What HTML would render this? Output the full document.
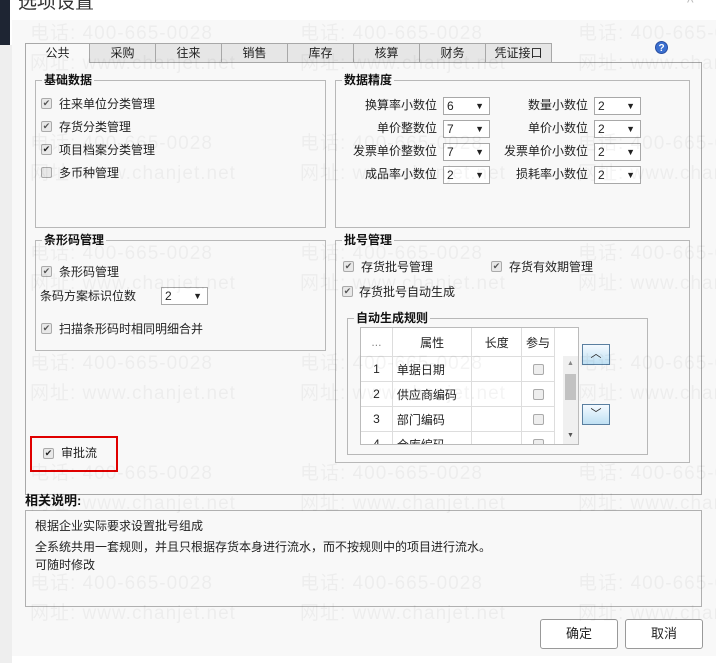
<!DOCTYPE html>
<html><head><meta charset="utf-8"><style>
*{box-sizing:border-box;margin:0;padding:0}
body{width:716px;height:663px;position:relative;background:#fff;font-family:"Liberation Sans","Noto Sans CJK SC",sans-serif;font-size:12px;color:#222;overflow:hidden}
.a{position:absolute}
.fs{position:absolute;border:1px solid #b8b8b8}
.lg{position:absolute;top:-9px;left:6px;background:#f8f8f8;padding:0 2px;font-weight:bold;font-size:12px;color:#111;line-height:16px}
.cb{position:absolute;width:11px;height:11px;border:1px solid #aaa;border-radius:2px;background:#e8e8e8;font-size:9px;line-height:9px;text-align:center;color:#555}
.t{position:absolute;white-space:nowrap;line-height:16px}
.sel{position:absolute;width:47px;height:18px;border:1px solid #a8a8a8;background:#fff;line-height:16px;padding-left:3px;font-size:12px}
.sel:after{content:"▼";position:absolute;right:5px;top:0;font-size:9px}
.tab{position:absolute;top:43px;height:19px;border:1px solid #a8a8a8;border-bottom:none;background:#e6e6e6;text-align:center;line-height:18px}
.wm{position:absolute;color:rgba(0,0,0,0.045);font-size:19px;white-space:nowrap;letter-spacing:1px;z-index:5}
td{border:1px solid #ddd;height:25px;font-size:12px}
</style></head><body>
<div class="a" style="left:0;top:0;width:10px;height:45px;background:#1e2533"></div>
<div class="a" style="left:0;top:45px;width:12px;height:618px;background:#eee"></div>
<div class="a" style="left:12px;top:20px;width:704px;height:636px;background:#f8f8f8"></div>
<div class="t" style="left:18px;top:-8px;font-size:19px;line-height:22px;color:#333">选项设置</div>
<div class="t" style="left:687px;top:-6px;font-size:14px;color:#bbb">^</div>
<!-- watermarks -->
<div class="wm" style="left:30px;top:18px">电话: 400-665-0028</div><div class="wm" style="left:300px;top:18px">电话: 400-665-0028</div><div class="wm" style="left:578px;top:18px">电话: 400-665-0028</div>
<div class="wm" style="left:30px;top:48px">网址: www.chanjet.net</div><div class="wm" style="left:300px;top:48px">网址: www.chanjet.net</div><div class="wm" style="left:578px;top:48px">网址: www.chanjet.net</div>
<div class="wm" style="left:30px;top:128px">电话: 400-665-0028</div><div class="wm" style="left:300px;top:128px">电话: 400-665-0028</div><div class="wm" style="left:578px;top:128px">电话: 400-665-0028</div>
<div class="wm" style="left:30px;top:158px">网址: www.chanjet.net</div><div class="wm" style="left:300px;top:158px">网址: www.chanjet.net</div><div class="wm" style="left:578px;top:158px">网址: www.chanjet.net</div>
<div class="wm" style="left:30px;top:238px">电话: 400-665-0028</div><div class="wm" style="left:300px;top:238px">电话: 400-665-0028</div><div class="wm" style="left:578px;top:238px">电话: 400-665-0028</div>
<div class="wm" style="left:30px;top:268px">网址: www.chanjet.net</div><div class="wm" style="left:300px;top:268px">网址: www.chanjet.net</div><div class="wm" style="left:578px;top:268px">网址: www.chanjet.net</div>
<div class="wm" style="left:30px;top:348px">电话: 400-665-0028</div><div class="wm" style="left:300px;top:348px">电话: 400-665-0028</div><div class="wm" style="left:578px;top:348px">电话: 400-665-0028</div>
<div class="wm" style="left:30px;top:378px">网址: www.chanjet.net</div><div class="wm" style="left:300px;top:378px">网址: www.chanjet.net</div><div class="wm" style="left:578px;top:378px">网址: www.chanjet.net</div>
<div class="wm" style="left:30px;top:458px">电话: 400-665-0028</div><div class="wm" style="left:300px;top:458px">电话: 400-665-0028</div><div class="wm" style="left:578px;top:458px">电话: 400-665-0028</div>
<div class="wm" style="left:30px;top:488px">网址: www.chanjet.net</div><div class="wm" style="left:300px;top:488px">网址: www.chanjet.net</div><div class="wm" style="left:578px;top:488px">网址: www.chanjet.net</div>
<div class="wm" style="left:30px;top:568px">电话: 400-665-0028</div><div class="wm" style="left:300px;top:568px">电话: 400-665-0028</div><div class="wm" style="left:578px;top:568px">电话: 400-665-0028</div>
<div class="wm" style="left:30px;top:598px">网址: www.chanjet.net</div><div class="wm" style="left:300px;top:598px">网址: www.chanjet.net</div><div class="wm" style="left:578px;top:598px">网址: www.chanjet.net</div>
<!-- tabs -->
<div class="a" style="left:25px;top:62px;width:677px;height:433px;border:1px solid #a8a8a8;background:#f8f8f8"></div>
<div class="tab" style="left:25px;width:65px;background:#f8f8f8;height:20px">公共</div>
<div class="tab" style="left:89px;width:67px">采购</div>
<div class="tab" style="left:155px;width:67px">往来</div>
<div class="tab" style="left:221px;width:67px">销售</div>
<div class="tab" style="left:287px;width:67px">库存</div>
<div class="tab" style="left:353px;width:67px">核算</div>
<div class="tab" style="left:419px;width:67px">财务</div>
<div class="tab" style="left:485px;width:67px">凭证接口</div>
<div class="a" style="left:655px;top:41px;width:13px;height:13px;border-radius:50%;background:#3a6fd0;color:#fff;font-size:10px;font-weight:bold;text-align:center;line-height:13px;border:1px solid #2a4fa0">?</div>
<!-- 基础数据 -->
<div class="fs" style="left:35px;top:80px;width:291px;height:148px"><div class="lg">基础数据</div></div>
<div class="cb" style="left:41px;top:98px">✔</div><div class="t" style="left:59px;top:96px">往来单位分类管理</div>
<div class="cb" style="left:41px;top:121px">✔</div><div class="t" style="left:59px;top:119px">存货分类管理</div>
<div class="cb" style="left:41px;top:144px;color:#222">✔</div><div class="t" style="left:59px;top:142px">项目档案分类管理</div>
<div class="cb" style="left:41px;top:167px"></div><div class="t" style="left:59px;top:165px">多币种管理</div>
<!-- 数据精度 -->
<div class="fs" style="left:335px;top:80px;width:355px;height:148px"><div class="lg">数据精度</div></div>
<div class="t" style="left:340px;top:97px;width:97px;text-align:right">换算率小数位</div><div class="sel" style="left:443px;top:97px">6</div>
<div class="t" style="left:340px;top:120px;width:97px;text-align:right">单价整数位</div><div class="sel" style="left:443px;top:120px">7</div>
<div class="t" style="left:340px;top:143px;width:97px;text-align:right">发票单价整数位</div><div class="sel" style="left:443px;top:143px">7</div>
<div class="t" style="left:340px;top:166px;width:97px;text-align:right">成品率小数位</div><div class="sel" style="left:443px;top:166px">2</div>
<div class="t" style="left:493px;top:97px;width:95px;text-align:right">数量小数位</div><div class="sel" style="left:594px;top:97px">2</div>
<div class="t" style="left:493px;top:120px;width:95px;text-align:right">单价小数位</div><div class="sel" style="left:594px;top:120px">2</div>
<div class="t" style="left:493px;top:143px;width:95px;text-align:right">发票单价小数位</div><div class="sel" style="left:594px;top:143px">2</div>
<div class="t" style="left:493px;top:166px;width:95px;text-align:right">损耗率小数位</div><div class="sel" style="left:594px;top:166px">2</div>
<!-- 条形码 -->
<div class="fs" style="left:35px;top:240px;width:291px;height:111px"><div class="lg">条形码管理</div></div>
<div class="cb" style="left:41px;top:266px">✔</div><div class="t" style="left:59px;top:264px">条形码管理</div>
<div class="t" style="left:40px;top:288px">条码方案标识位数</div><div class="sel" style="left:161px;top:287px">2</div>
<div class="cb" style="left:41px;top:323px">✔</div><div class="t" style="left:59px;top:321px">扫描条形码时相同明细合并</div>
<!-- 批号 -->
<div class="fs" style="left:335px;top:240px;width:355px;height:223px"><div class="lg">批号管理</div></div>
<div class="cb" style="left:343px;top:261px">✔</div><div class="t" style="left:361px;top:259px">存货批号管理</div>
<div class="cb" style="left:491px;top:261px">✔</div><div class="t" style="left:509px;top:259px">存货有效期管理</div>
<div class="cb" style="left:342px;top:286px">✔</div><div class="t" style="left:359px;top:284px">存货批号自动生成</div>
<div class="fs" style="left:347px;top:318px;width:301px;height:137px"><div class="lg">自动生成规则</div></div>
<div class="a" style="left:360px;top:327px;width:219px;height:118px;border:1px solid #bbb;background:#fff;overflow:hidden">
<table style="border-collapse:collapse;position:absolute;left:-1px;top:-1px;width:195px">
<tr><td style="width:32px;text-align:center;color:#888;height:29px">...</td><td style="width:80px;text-align:center">属性</td><td style="width:50px;text-align:center">长度</td><td style="width:33px;text-align:center">参与</td></tr>
<tr><td style="text-align:center">1</td><td style="padding-left:4px">单据日期</td><td></td><td><div style="width:11px;height:11px;border:1px solid #aaa;border-radius:2px;background:#eee;margin:auto"></div></td></tr>
<tr><td style="text-align:center">2</td><td style="padding-left:4px">供应商编码</td><td></td><td><div style="width:11px;height:11px;border:1px solid #aaa;border-radius:2px;background:#eee;margin:auto"></div></td></tr>
<tr><td style="text-align:center">3</td><td style="padding-left:4px">部门编码</td><td></td><td><div style="width:11px;height:11px;border:1px solid #aaa;border-radius:2px;background:#eee;margin:auto"></div></td></tr>
<tr><td style="text-align:center">4</td><td style="padding-left:4px">仓库编码</td><td></td><td><div style="width:11px;height:11px;border:1px solid #aaa;border-radius:2px;background:#eee;margin:auto"></div></td></tr>
</table>
<div class="a" style="left:202px;top:28px;width:15px;height:89px;background:#f0f0f0"></div>
<div class="a" style="left:204px;top:46px;width:11px;height:26px;background:#c2c2c2"></div>
<div class="a" style="left:206px;top:32px;font-size:7px;color:#888">▲</div>
<div class="a" style="left:206px;top:104px;font-size:7px;color:#555">▼</div>
</div>
<div class="a" style="left:582px;top:344px;width:28px;height:21px;border:1px solid #5a7fa0;background:linear-gradient(#f4faff,#bfe0f3);text-align:center;font-size:11px;line-height:18px">︿</div>
<div class="a" style="left:582px;top:404px;width:28px;height:21px;border:1px solid #5a7fa0;background:linear-gradient(#f4faff,#bfe0f3);text-align:center;font-size:11px;line-height:18px">﹀</div>
<!-- 审批流 -->
<div class="a" style="left:30px;top:436px;width:88px;height:36px;border:2px solid #e00000"></div>
<div class="cb" style="left:43px;top:448px;color:#222">✔</div><div class="t" style="left:61px;top:445px">审批流</div>
<!-- 说明 -->
<div class="t" style="left:25px;top:493px;font-weight:bold;font-size:13px;color:#111">相关说明:</div>
<div class="a" style="left:25px;top:510px;width:677px;height:97px;border:1px solid #b0b0b0"></div>
<div class="t" style="left:35px;top:518px">根据企业实际要求设置批号组成</div>
<div class="t" style="left:35px;top:539px">全系统共用一套规则，并且只根据存货本身进行流水，而不按规则中的项目进行流水。</div>
<div class="t" style="left:35px;top:557px">可随时修改</div>
<div class="a" style="left:540px;top:619px;width:78px;height:30px;border:1px solid #999;border-radius:3px;background:#fff;text-align:center;line-height:28px;font-size:13px">确定</div>
<div class="a" style="left:625px;top:619px;width:78px;height:30px;border:1px solid #999;border-radius:3px;background:#fff;text-align:center;line-height:28px;font-size:13px">取消</div>
</body></html>
